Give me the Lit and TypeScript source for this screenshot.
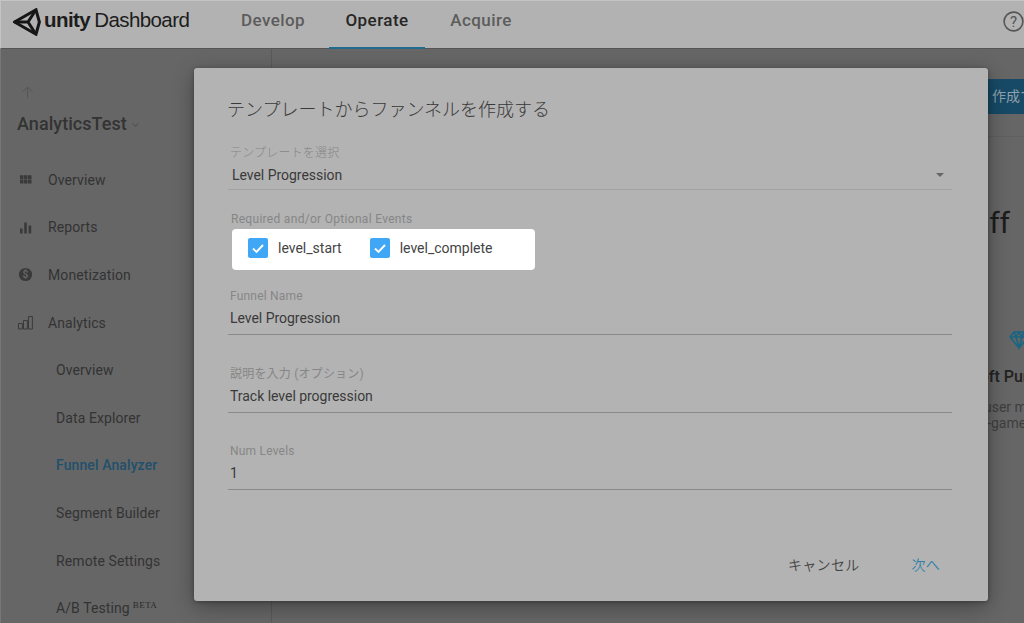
import { LitElement, html, css, svg } from "lit";
import { customElement } from "lit/decorators.js";

const ICONS: Record<string, unknown> = {
  grid: svg`<path d="M2 3.2h3.5v3.8H2zM6 3.2h3.5v3.8H6zM10 3.2h3.5v3.8H10zM2 7.6h3.5v3.8H2zM6 7.6h3.5v3.8H6zM10 7.6h3.5v3.8H10z" fill="#3a3a3a"/>`,
  bars: svg`<path d="M2 8.5h2.6v5H2zM6.2 2.5h2.6v11H6.2zM10.6 5.5h2.6v8h-2.6z" fill="#3a3a3a"/>`,
  coin: svg`<circle cx="7.5" cy="7.5" r="6.6" fill="#3a3a3a"/><text x="7.5" y="11" text-anchor="middle" font-size="10" font-weight="700" font-family="Roboto, sans-serif" fill="#666">$</text>`,
  chart: svg`<path d="M.5 14V8.5h3.9V14zM5.5 14V5.5h3.9V14zM10.5 14V1.5h3.9V14z" fill="none" stroke="#3a3a3a" stroke-width="1"/>`,
};

@customElement("app-root")
export class AppRoot extends LitElement {
  static styles = css`
    :host { display: block; width: 1024px; height: 623px; overflow: hidden; position: relative; background: #666; font-family: Roboto, "Noto Sans CJK JP", sans-serif; color: #2e2e2e; }
    .header { background: #b2b2b2; border-top: 1px solid #c4c4c4; border-left: 1px solid #c4c4c4; border-bottom: 1px solid #555; display: flex; align-items: center; position: relative; box-sizing: border-box; height: 49px; }
    .logo { display: flex; align-items: center; margin-left: 12px; width: 212px; flex: none; height: 100%; padding-bottom: 6px; box-sizing: border-box; }
    .logo svg { width: 28px; height: 28px; flex: none; }
    .brand { font-family: "Liberation Sans", sans-serif; font-size: 20.5px; letter-spacing: -0.58px; color: #1c1c1c; margin-left: 3px; margin-bottom: 3px; white-space: nowrap; }
    .brand b { font-weight: 700; margin-right: -1px; }
    .tabs { display: flex; height: 100%; }
    .tab { height: 100%; box-sizing: border-box; width: 96px; display: flex; align-items: center; justify-content: center; font-size: 17px; font-weight: 500; color: #5c5c5c; margin-right: 8px; padding-bottom: 10px; letter-spacing: 0.45px; }
    .tab.active { color: #262626; border-bottom: 2px solid #1f6c8f; padding-bottom: 8px; margin-bottom: -1px; height: calc(100% + 1px); }
    .help { position: absolute; left: 1002px; top: 10px; width: 21px; height: 21px; }
    .body { display: flex; height: 574px; }
    .side { width: 272px; flex: none; border-left: 1px solid #777; border-right: 1px solid #5a5a5a; box-sizing: border-box; padding-left: 16px; background: #666; position: relative; }
    .up { margin-top: 36px; height: 15px; display: block; margin-left: 3px; }
    .proj { font-size: 18px; font-weight: 500; color: #333; margin-top: 11px; height: 25px; line-height: 25px; letter-spacing: 0.05px; display: flex; align-items: center; gap: 4px; }
    .proj i { width: 4px; height: 4px; border-right: 1px solid #555; border-bottom: 1px solid #555; transform: rotate(45deg); margin-top: -1px; margin-left: 2px; }
    .nav { margin-top: 20px; margin-left: 1px; }
    .row { height: 47.6px; display: flex; align-items: center; font-size: 14px; color: #333; letter-spacing: 0.1px; white-space: nowrap; }
    .row svg { width: 15px; height: 15px; flex: none; margin-right: 15px; }
    .row.sub { padding-left: 38px; }
    .row.active { color: #1f506c; font-weight: 500; }
    sup { font-family: "Liberation Serif", serif; font-size: 9px; line-height: 0; margin-left: 3px; position: relative; top: -3px; vertical-align: 5px; color: #2a2a2a; letter-spacing: 0.4px; }
    .main { flex: 1; position: relative; overflow: hidden; background: #666; }
    .create { position: absolute; left: 700px; top: 30px; width: 60px; height: 35px; box-sizing: border-box; background: #174a67; color: #8fa2ad; font-size: 14px; line-height: 35px; padding-left: 20px; white-space: nowrap; border-radius: 2px; overflow: hidden; }
    .line { position: absolute; left: 0; right: 0; top: 87px; height: 1px; background: #5f5f5f; }
    .off { position: absolute; right: 14px; top: 156px; font-size: 30px; line-height: 35px; color: #1c1c1c; white-space: nowrap; }
    .gem { position: absolute; left: 737px; top: 281px; width: 20px; height: 20px; }
    .pur { position: absolute; left: 698px; top: 318px; font-size: 16px; font-weight: 500; color: #222; white-space: nowrap; }
    .desc { position: absolute; left: 704px; top: 350px; font-size: 14px; line-height: 16px; color: #3e3e3e; white-space: nowrap; display: flex; flex-direction: column; }
    .desc span:first-child { margin-left: 8px; }
    .dialog { position: absolute; left: 194px; top: 68px; width: 794px; height: 533px; box-sizing: border-box; background: #b3b3b3; border-radius: 3px; box-shadow: 0 6px 22px rgba(0,0,0,.32), 0 1px 4px rgba(0,0,0,.3); padding: 28px 36px 0 34px; display: flex; flex-direction: column; }
    h2 { margin: 0 0 0 -1px; font: 300 18px/24px "Noto Sans CJK JP", sans-serif; color: #3a3a3a; height: 24px; }
    .field { display: flex; flex-direction: column; }
    .label { font-size: 12px; line-height: 16px; color: #868686; letter-spacing: 0.2px; padding-left: 2px; white-space: nowrap; }
    .value { font-size: 14px; line-height: 20px; color: #3a3a3a; margin-top: 4px; padding-left: 2px; padding-bottom: 6px; border-bottom: 1px solid #8a8a8a; letter-spacing: -0.03px; }
    .select { margin-top: 24px; }
    .select .value { padding-left: 4px; border-bottom-color: #a2a2a2; margin-top: 5px; padding-bottom: 4px; position: relative; }
    .select .label { font-family: "Noto Sans CJK JP", sans-serif; font-weight: 300; }
    .caret { position: absolute; right: 8px; top: 8px; border-left: 4px solid transparent; border-right: 4px solid transparent; border-top: 4px solid #666; }
    .events-label { margin-top: 21px; padding-left: 3px; letter-spacing: 0.3px; }
    .panel { margin: 2px 0 0 4px; width: 303px; height: 41px; background: #fff; border-radius: 4px; display: flex; align-items: center; padding: 0 0 4px 16px; box-sizing: border-box; font-size: 14px; color: #444; }
    .check { display: flex; align-items: center; gap: 10px; margin-right: 28px; }
    .box { width: 20px; height: 20px; background: #3fa7f5; border-radius: 2px; display: block; }
    .f1 { margin-top: 18px; }
    .f2 { margin-top: 31px; }
    .f3 { margin-top: 30px; }
    .actions { position: absolute; top: 486px; left: 594px; display: flex; font: 350 14px/20px "Noto Sans CJK JP", sans-serif; letter-spacing: 0.3px; color: #444; white-space: nowrap; }
    .next { color: #2e7fa8; margin-left: 52px; }
  `;

  private row(label: string, icon?: string, cls = "") {
    return html`<div class="row ${cls}">${icon ? html`<svg viewBox="0 0 15 15">${ICONS[icon]}</svg>` : ""}${label}</div>`;
  }

  render() {
    const tick = html`<svg class="box" viewBox="0 0 20 20"><path d="M5 10.5l3.5 3.5L15 7" fill="none" stroke="#fff" stroke-width="1.9"/></svg>`;
    return html`
      <div class="header">
        <div class="logo">
          <svg viewBox="0 0 28 28" fill="none" stroke="#161616" stroke-width="3" stroke-linejoin="miter">
            <path d="M1.5 14 L23 1.8 L26.4 14 L23 26.2 Z"/>
            <path d="M1.5 14 H15 M15 14 L22.5 2.5 M15 14 L22.5 25.5"/>
          </svg>
          <span class="brand"><b>unity</b> Dashboard</span>
        </div>
        <div class="tabs">
          <div class="tab">Develop</div>
          <div class="tab active">Operate</div>
          <div class="tab">Acquire</div>
        </div>
        <svg class="help" viewBox="0 0 21 21">
          <circle cx="10.5" cy="10.5" r="9.4" fill="none" stroke="#555" stroke-width="1.6"/>
          <text x="10.5" y="15.6" text-anchor="middle" font-size="15" font-family="Roboto, sans-serif" fill="#555">?</text>
        </svg>
      </div>
      <div class="body">
        <div class="side">
          <svg class="up" viewBox="0 0 15 15" width="15" height="15"><path d="M7.5 13V2M2.5 7l5-5 5 5" fill="none" stroke="#555" stroke-width="1"/></svg>
          <div class="proj">AnalyticsTest<i></i></div>
          <div class="nav">
            ${this.row("Overview", "grid")}
            ${this.row("Reports", "bars")}
            ${this.row("Monetization", "coin")}
            ${this.row("Analytics", "chart")}
            ${this.row("Overview", undefined, "sub")}
            ${this.row("Data Explorer", undefined, "sub")}
            ${this.row("Funnel Analyzer", undefined, "sub active")}
            ${this.row("Segment Builder", undefined, "sub")}
            ${this.row("Remote Settings", undefined, "sub")}
            <div class="row sub">A/B Testing<sup>BETA</sup></div>
          </div>
        </div>
        <div class="main">
          <div class="create">作成する</div>
          <div class="line"></div>
          <div class="off">Payoff</div>
          <svg class="gem" viewBox="0 0 20 20"><path d="M5 2h10l4 5-9 11L1 7zM1 7h18M7 7l3 11 3-11M5 2l2 5 3-5 3 5 2-5" fill="none" stroke="#1a6582" stroke-width="1.7"/></svg>
          <div class="pur">Soft Purchase</div>
          <div class="desc"><span>user made</span><span>in-game</span></div>
        </div>
      </div>
      <div class="dialog">
        <h2>テンプレートからファンネルを作成する</h2>
        <div class="field select">
          <div class="label">テンプレートを選択</div>
          <div class="value">Level Progression<span class="caret"></span></div>
        </div>
        <div class="label events-label">Required and/or Optional Events</div>
        <div class="panel">
          <label class="check">${tick} level_start</label>
          <label class="check">${tick} level_complete</label>
        </div>
        <div class="field f1">
          <div class="label">Funnel Name</div>
          <div class="value">Level Progression</div>
        </div>
        <div class="field f2">
          <div class="label">説明を入力 (オプション)</div>
          <div class="value">Track level progression</div>
        </div>
        <div class="field f3">
          <div class="label">Num Levels</div>
          <div class="value">1</div>
        </div>
        <div class="actions"><span>キャンセル</span><span class="next">次へ</span></div>
      </div>
    `;
  }
}
